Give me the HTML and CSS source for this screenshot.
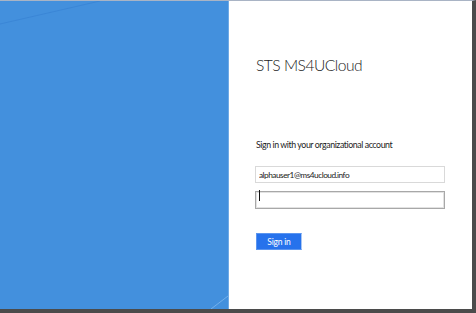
FILE: index.html
```html
<!DOCTYPE html>
<html>
<head>
  <link rel="stylesheet" href="styles.css">
</head>
<body>
  <div class="frame">
    <div class="illustration">
      <!-- faint diagonal streaks on the blue background -->
      <svg class="streaks" width="228" height="308" viewBox="0 0 228 308">
        <line x1="0" y1="23" x2="100" y2="0" stroke="#3b86d6" stroke-width="1"/>
        <line x1="211" y1="308" x2="228" y2="295" stroke="#74b0ea" stroke-width="1"/>
      </svg>
    </div>
    <div class="form-pane">
      <h1 class="title">STS MS4UCloud</h1>
      <p class="intro">Sign in with your organizational account</p>
      <form class="login-form">
        <input class="field field-user" type="text" value="alphauser1@ms4ucloud.info">
        <div class="pass-wrap">
          <input class="field field-pass" type="password">
        </div>
        <button class="submit" type="button">Sign in</button>
      </form>
    </div>
  </div>
</body>
</html>
```

FILE: styles.css
```css
body {
  margin: 0;
  font-family: Lato, "Open Sans", sans-serif;
  background-color: #fff;
}
.frame {
  display: flex;
  width: 476px;
  height: 313px;
  box-sizing: border-box;
  border-top: 1px solid #a9b4c5;
  border-right: 4px solid #4b4b4b;
  border-bottom: 4px solid #4b4b4b;
}
.illustration {
  position: relative;
  width: 228px;
  background-color: #4390dd;
  border-right: 1px solid #6faae6;
  overflow: hidden;
}
.streaks {
  position: absolute;
  left: 0;
  top: 0;
}
.form-pane {
  flex: 1;
  padding: 53px 0 0 27px;
  color: #222;
}
.title {
  margin: 0;
  font-size: 15.6px;
  font-weight: 300;
  letter-spacing: -0.5px;
  line-height: 22px;
}
.intro {
  margin: 62px 0 0;
  font-size: 8.8px;
  letter-spacing: -0.42px;
  line-height: 14px;
}
.login-form {
  display: flex;
  flex-direction: column;
  align-items: flex-start;
  margin-top: 14px;
}
.field {
  width: 190px;
  height: 17px;
  box-sizing: border-box;
  margin: 0 0 4px -1px;
  padding: 0 3px;
  font-family: inherit;
  font-size: 8.3px;
  letter-spacing: -0.5px;
  color: #222;
  border: 1px solid #d9d9d9;
  outline: none;
}
/* password box has focus: darker border and a caret */
.pass-wrap {
  position: relative;
}
.pass-wrap::after {
  content: "";
  position: absolute;
  left: 3px;
  top: 3px;
  width: 1px;
  height: 11px;
  background-color: #111;
}
.field-pass {
  height: 18px;
  border: 1px solid #a8a8a8;
  box-shadow: inset 0 0 0 1px #e2e2e2;
}
.submit {
  margin-top: 20px;
  width: 46px;
  height: 17px;
  padding: 0;
  font-family: inherit;
  font-size: 8.5px;
  letter-spacing: -0.2px;
  color: #fff;
  background-color: #2672ec;
  border: 1px solid #5b95ef;
  border-right-color: #a9c6f3;
}
```
